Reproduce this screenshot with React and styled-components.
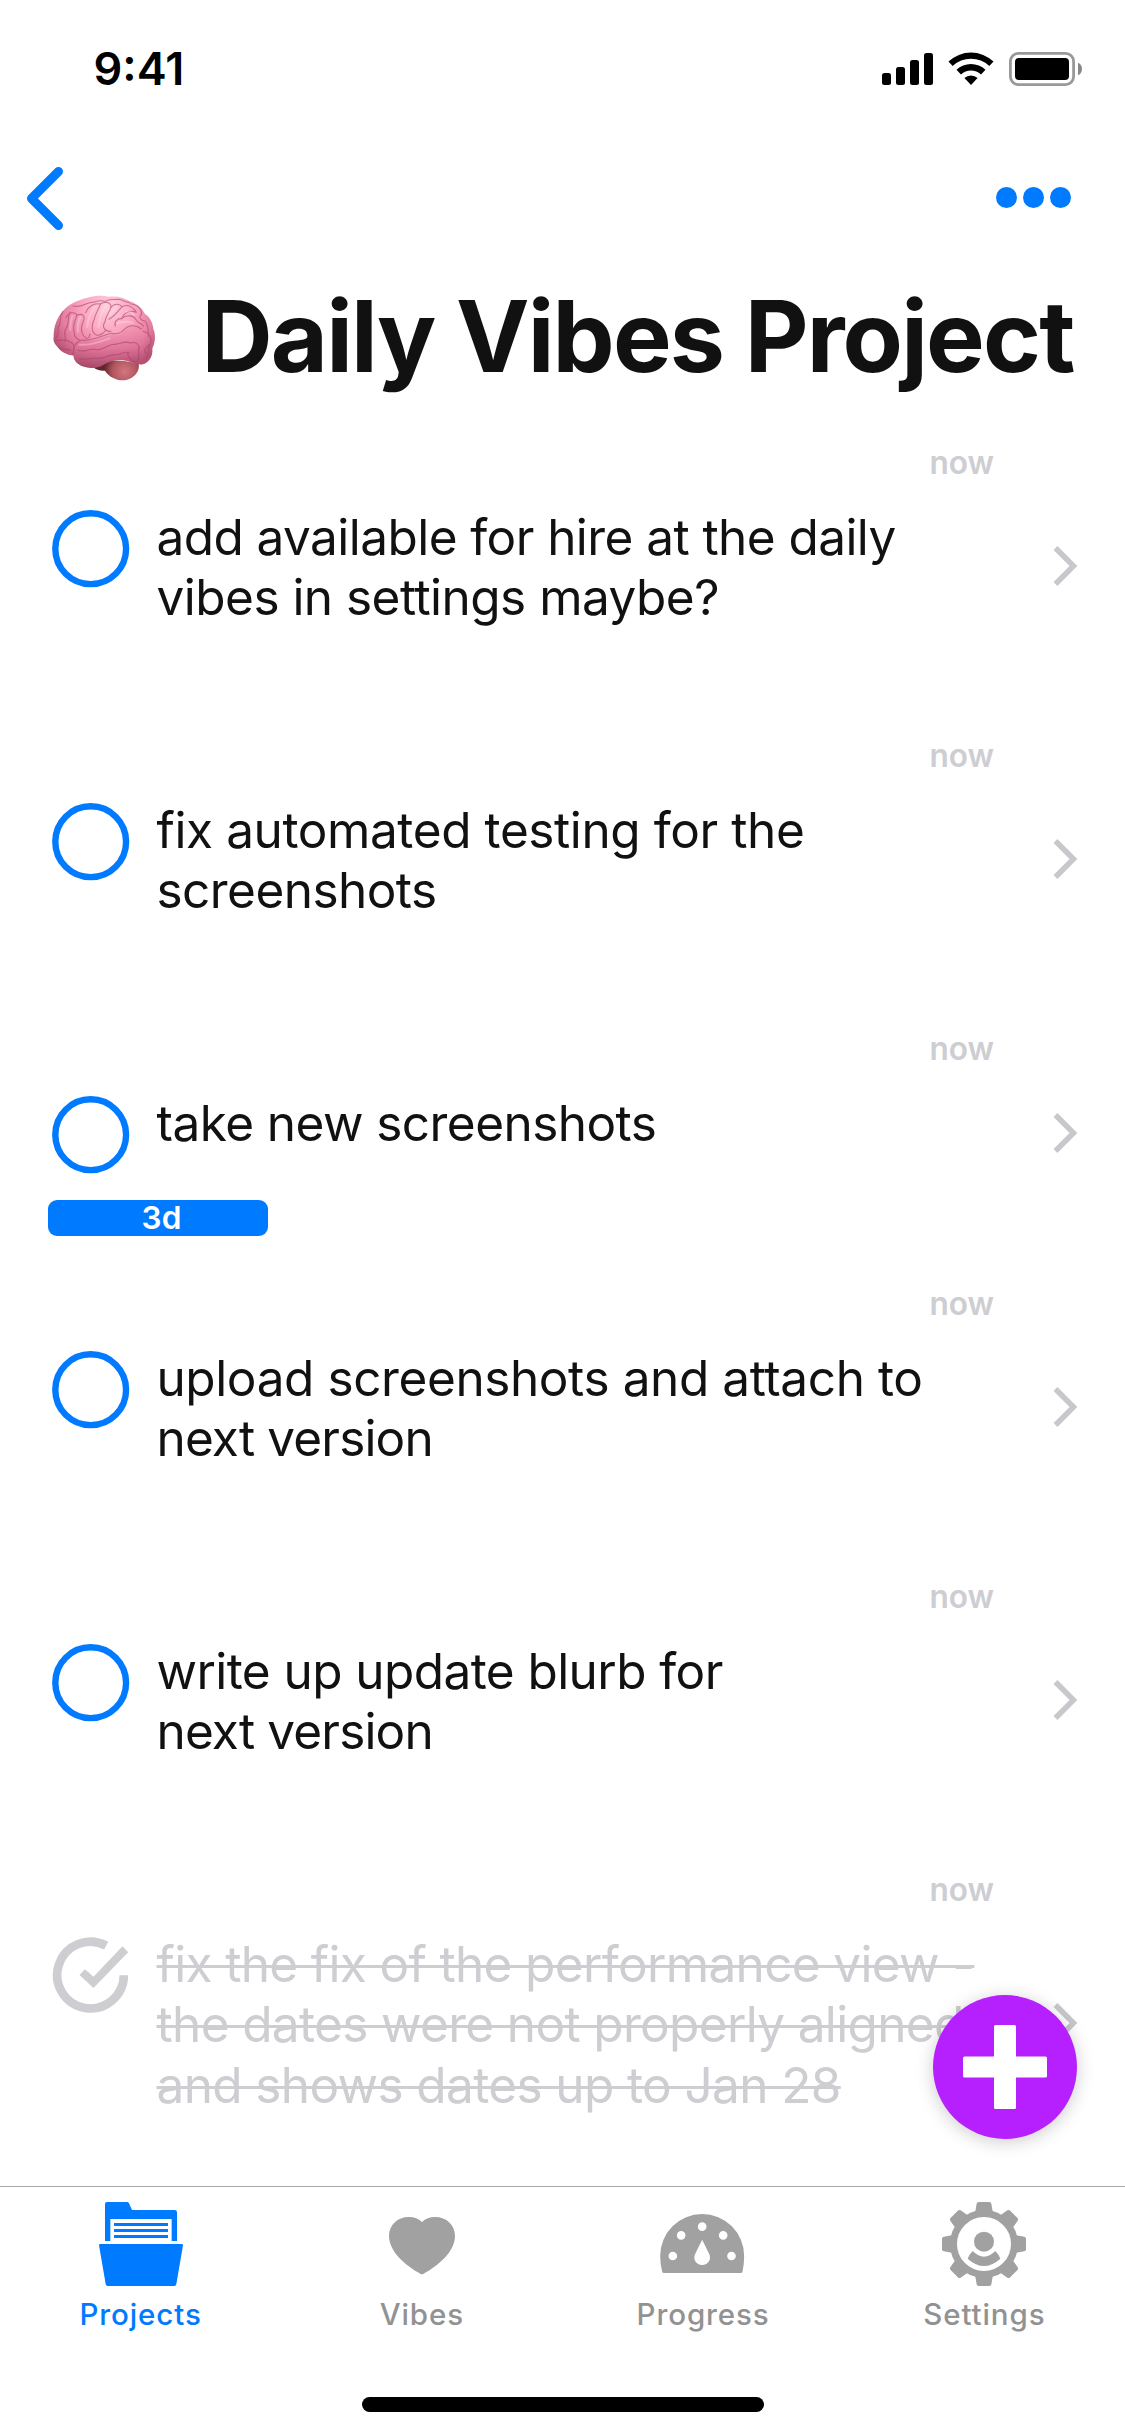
import React from "react";
import styled, { createGlobalStyle } from "styled-components";

const BLUE = "#007aff";
const MUTED = "#cdcdd2";

const GlobalStyle = createGlobalStyle`
  * { box-sizing: border-box; }
  body { margin: 0; background: #fff; }
`;

const Screen = styled.div`
  position: relative;
  display: flex;
  flex-direction: column;
  width: 1125px;
  height: 2436px;
  overflow: hidden;
  background: #fff;
  color: #111;
  font-family: Inter, "Liberation Sans", sans-serif;
`;

const StatusBar = styled.div`
  display: flex;
  justify-content: space-between;
  align-items: flex-start;
  height: 132px;
  padding: 42px 42px 0 93.5px;
  color: #000;
`;

const Clock = styled.span`
  font-size: 45px;
  font-weight: 600;
  line-height: 54px;
  letter-spacing: 0;
`;

const StatusIcons = styled.svg`
  width: 201px;
  height: 34px;
  margin-top: 10px;
`;

const NavBar = styled.header`
  display: flex;
  justify-content: space-between;
  height: 132px;
  padding: 35px 54px 0 26px;
`;

const BackIcon = styled.svg`
  width: 38px;
  height: 64px;
`;

const Dots = styled.div`
  display: flex;
  gap: 6px;
  padding-top: 20px;
`;

const Dot = styled.span`
  width: 21px;
  height: 21px;
  border-radius: 50%;
  background: ${BLUE};
`;

const TitleRow = styled.div`
  display: flex;
  height: 155px;
  padding: 12px 0 0 53px;
`;

const BrainIcon = styled.svg`
  flex: none;
  width: 103px;
  height: 86px;
  margin-top: 18.5px;
`;

const Title = styled.h1`
  margin: 0 0 0 45.5px;
  font-size: 98.6px;
  font-weight: 700;
  line-height: 120px;
  letter-spacing: -1.85px;
  white-space: nowrap;
`;

const List = styled.ul`
  flex: 1;
  min-height: 0;
  overflow: hidden;
  margin: 0;
  padding: 0;
  list-style: none;
`;

const Row = styled.li`
  display: flex;
  height: ${(p) => p.$height}px;
  padding: 0 46px 0 48px;
`;

const RowMain = styled.div`
  display: flex;
  flex: none;
  flex-direction: column;
  width: 946px;
  padding-top: 24px;
`;

const Time = styled.span`
  align-self: flex-end;
  font-size: 31.6px;
  font-weight: 600;
  line-height: 40px;
  color: ${MUTED};
`;

const Task = styled.div`
  display: flex;
  margin-top: 23.5px;
`;

const Check = styled.svg`
  flex: none;
  width: 78px;
  height: 78px;
  margin: 3px 27px 0 3.5px;
`;

const TaskText = styled.div`
  display: flex;
  flex-direction: column;
  align-items: flex-start;
  height: 81px;
  font-size: 49.5px;
  line-height: 60.5px;
  white-space: nowrap;
  color: ${(p) => (p.$done ? MUTED : "#111")};
`;

const Line = styled.span`
  letter-spacing: ${(p) => p.$tracking}px;
  text-decoration: ${(p) => (p.$done ? "line-through 3px" : "none")};
`;

const Badge = styled.span`
  width: 220px;
  height: 36px;
  margin-top: 26.5px;
  padding-left: 7px;
  border-radius: 9px;
  background: ${BLUE};
  color: #fff;
  font-size: 31.6px;
  font-weight: 600;
  line-height: 36px;
  text-align: center;
`;

const Chevron = styled.svg`
  flex: none;
  align-self: center;
  width: 26px;
  height: 42px;
  margin-left: 59px;
`;

const AddButton = styled.button`
  position: absolute;
  right: 48px;
  bottom: 297px;
  display: flex;
  align-items: center;
  justify-content: center;
  width: 144px;
  height: 144px;
  padding: 0;
  border: 0;
  border-radius: 50%;
  background: #b620ff;
  box-shadow: 0 3px 18px rgba(0, 0, 0, 0.2);
`;

const TabBar = styled.nav`
  display: flex;
  flex-direction: column;
  height: 250px;
  border-top: 1px solid #a9a9a9;
`;

const Tabs = styled.div`
  display: grid;
  grid-template-columns: repeat(4, 1fr);
`;

const Tab = styled.div`
  display: flex;
  flex-direction: column;
  align-items: center;
  padding-top: 15px;
  color: ${(p) => (p.$active ? BLUE : "#929292")};
`;

const TabIcon = styled.svg`
  width: 84px;
  height: 84px;
  fill: ${(p) => (p.$active ? BLUE : "#a1a1a1")};
`;

const TabLabel = styled.span`
  margin-top: 10px;
  font-size: 29.5px;
  font-weight: 500;
  line-height: 36px;
  letter-spacing: 0.9px;
`;

const HomeIndicator = styled.div`
  width: 402px;
  height: 15px;
  margin: 65px auto 0;
  border-radius: 8px;
  background: #000;
`;

function StatusGlyphs() {
  return (
    <StatusIcons viewBox="882 52 201 34">
      <rect x="882" y="73" width="9" height="12" rx="2.5" />
      <rect x="896" y="67" width="9" height="18" rx="2.5" />
      <rect x="910" y="60" width="9" height="25" rx="2.5" />
      <rect x="924" y="53" width="9" height="32" rx="2.5" />
      <path d="M948.5 61.6 A32.5 32.5 0 0 1 993.5 61.6 L989.3 66 A26.4 26.4 0 0 0 952.7 66 Z" />
      <path d="M956.5 69.8 A21 21 0 0 1 985.5 69.8 L981 74.4 A14.6 14.6 0 0 0 961 74.4 Z" />
      <path d="M964.4 78 A9.7 9.7 0 0 1 977.6 78 L971 85 Z" />
      <rect x="1010.4" y="53.4" width="63.2" height="31.2" rx="8" fill="none" stroke="#999" strokeWidth="2.8" />
      <rect x="1015" y="58" width="54" height="22" rx="4" />
      <path d="M1078 62.8 A6.8 6.8 0 0 1 1078 75.2 Z" fill="#888" />
    </StatusIcons>
  );
}

function Brain() {
  return (
    <BrainIcon viewBox="160 464 309 258">
      <defs>
        <radialGradient id="cortex" gradientUnits="userSpaceOnUse" cx="325" cy="500" r="190">
          <stop offset="0" stopColor="#ffcfde" />
          <stop offset="0.4" stopColor="#fba6c1" />
          <stop offset="0.75" stopColor="#e57c9f" />
          <stop offset="1" stopColor="#b65375" />
        </radialGradient>
        <linearGradient id="lobe" x1="0" y1="0" x2="0" y2="1">
          <stop offset="0" stopColor="#f293b1" />
          <stop offset="0.5" stopColor="#dd6f95" />
          <stop offset="1" stopColor="#9c405f" />
        </linearGradient>
        <radialGradient id="stem" gradientUnits="userSpaceOnUse" cx="375" cy="694" r="62">
          <stop offset="0" stopColor="#d4757f" />
          <stop offset="0.6" stopColor="#b0565f" />
          <stop offset="1" stopColor="#5f272d" />
        </radialGradient>
      </defs>
      <path d="M280 680 C300 664 345 650 417 672 C421 694 402 714 382 718 C358 724 330 713 316 691 C302 692 290 689 280 680Z" fill="url(#stem)" />
      <path d="M162 588 C162 560 171 532 190 512 C206 491 238 478 264 472 C290 464 310 465 328 469 C350 466 374 471 389 482 C414 490 428 505 436 521 C451 531 459 546 461 566 C470 587 465 611 458 624 C460 646 451 663 435 670 C418 677 398 670 384 662 C356 655 331 660 309 675 C287 687 252 684 237 672 C225 663 222 654 222 646 C203 644 180 633 174 620 C163 610 160 601 162 588Z" fill="url(#cortex)" />
      <path d="M223 628 C228 604 247 598 272 601 C300 600 320 583 343 583 C358 587 365 580 376 568 C392 553 417 556 430 571 C441 588 425 605 431 626 C437 646 423 657 407 668 C376 655 341 655 309 675 C287 687 252 684 237 672 C221 657 218 643 223 628Z" fill="url(#lobe)" opacity="0.62" />
      <g fill="none" stroke="#a84469" strokeWidth="3.2" strokeLinecap="round" strokeLinejoin="round" opacity="0.62">
        <path d="M222 642 C220 616 230 602 250 599 C280 602 306 588 328 580 C345 578 358 586 373 568 C388 552 410 554 425 566" />
        <path d="M235 629 C251 639 267 625 283 627 C305 634 323 613 342 612 C362 613 374 599 392 608 C406 604 415 611 419 620" />
        <path d="M240 655 C260 660 274 652 290 654 C312 658 328 642 346 643 C363 644 371 632 389 637" />
        <path d="M418 620 C413 637 424 651 411 668 M384 637 C382 650 398 661 407 666" />
        <path d="M166 599 C179 604 196 592 211 605 C223 608 228 621 218 641 M175 618 C187 629 198 624 213 630" />
        <path d="M190 513 C176 533 187 541 177 559 C172 571 182 577 170 591" />
        <path d="M199 532 C207 515 228 513 232 524 C225 544 218 560 224 579 C224 592 232 595 242 600" />
        <path d="M211 515 C200 539 211 549 199 565 C188 580 203 591 195 603" />
        <path d="M232 525 C249 517 258 528 251 543 C242 564 245 578 252 587 C262 600 273 591 270 581" />
        <path d="M258 517 C264 500 281 487 302 491 C298 507 287 519 284 536 C274 556 275 576 290 584 C301 588 315 575 319 569" />
        <path d="M302 491 C320 480 337 488 333 502 C330 515 318 526 316 544 C305 560 316 575 334 573" />
        <path d="M333 502 C344 488 360 490 367 499 C355 514 342 529 328 537" />
        <path d="M367 499 C386 489 403 503 410 516 C387 507 370 521 366 535 C352 534 342 546 347 557" />
        <path d="M366 535 C381 521 403 525 410 540 C418 553 431 548 431 558" />
        <path d="M220 497 C248 505 261 483 282 486 C299 476 310 484 318 483 C331 473 341 480 356 477 C370 477 377 487 389 486" />
        <path d="M391 490 C418 494 427 508 425 524 C415 529 423 541 436 542 C449 556 443 575 448 589" />
        <path d="M430 573 C445 576 459 590 452 611 C442 618 429 630 439 640 M452 612 C444 626 450 640 439 653" />
      </g>
      <g fill="none" stroke="#ffe3ec" strokeWidth="6" strokeLinecap="round" opacity="0.35">
        <path d="M218 527 C213 543 211 555 212 569" />
        <path d="M242 530 C235 546 233 560 235 574" />
        <path d="M285 500 C271 520 264 540 263 560" />
        <path d="M318 496 C304 514 300 535 296 560" />
        <path d="M350 499 C343 510 337 518 330 523" />
        <path d="M353 549 C372 542 386 543 399 548" />
        <path d="M379 514 C390 513 399 518 403 524" />
        <path d="M240 613 C270 617 301 604 330 594" />
      </g>
    </BrainIcon>
  );
}

function OpenCheck() {
  return (
    <Check viewBox="0 0 78 78">
      <circle cx="38.7" cy="38.7" r="35.4" fill="none" stroke={BLUE} strokeWidth="6.4" />
    </Check>
  );
}

function DoneCheck() {
  return (
    <Check viewBox="154.5 50 234 234">
      <path d="M317 76 A100 100 0 1 0 370 165" fill="none" stroke={MUTED} strokeWidth="26" />
      <path d="M253 147 L237 164 L279 203 L383 96 L366 78 L279 169 Z" fill={MUTED} />
    </Check>
  );
}

const icons = {
  projects: (
    <TabIcon $active viewBox="177 66 252 252">
      <path d="M195 183 V72 Q195 66 201 66 H261 Q265 66 267 70 L276 90 H404 Q411 90 411 97 V183 H395 V117 H211 V183 Z" />
      <path d="M222 129 H384 V138 H222 Z M222 147 H384 V156 H222 Z M222 165 H384 V174 H222 Z" />
      <path d="M180 192 H426 Q429 192 429 196 L409 312 Q408 318 403 318 H203 Q198 318 197 312 L177 196 Q177 192 180 192 Z" />
    </TabIcon>
  ),
  vibes: (
    <TabIcon viewBox="1020 66 252 252">
      <path d="M1146 126 C1156 116 1170 111 1185 111 C1220 111 1245 135 1245 168 C1245 215 1195 257 1151 281 Q1146 284 1141 281 C1097 257 1047 215 1047 168 C1047 135 1072 111 1107 111 C1122 111 1136 116 1146 126 Z" />
    </TabIcon>
  ),
  progress: (
    <TabIcon viewBox="182.5 66 252 252" overflow="visible">
      <path
        fillRule="evenodd"
        d="M191 279 Q187 279 186 275 Q180 252 180 228 A126 126 0 0 1 432 228 Q432 252 427 275 Q426 279 422 279 Z
        M293 140 a13 13 0 1 0 26 0 a13 13 0 1 0 -26 0 Z
        M230 166 a13 13 0 1 0 26 0 a13 13 0 1 0 -26 0 Z
        M356 166 a13 13 0 1 0 26 0 a13 13 0 1 0 -26 0 Z
        M205 228 a13 13 0 1 0 26 0 a13 13 0 1 0 -26 0 Z
        M381 228 a13 13 0 1 0 26 0 a13 13 0 1 0 -26 0 Z
        M306 179 L286 220 C276 238 288 255 306 255 C324 255 336 238 326 220 Z"
      />
    </TabIcon>
  ),
  settings: (
    <TabIcon viewBox="-126 -126 252 252">
      <circle r="91.5" fill="none" stroke="#a1a1a1" strokeWidth="21" />
      {[0, 45, 90, 135, 180, 225, 270, 315].map((angle) => (
        <path
          key={angle}
          transform={`rotate(${angle})`}
          d="M-27 -92 L-22 -121 Q-21 -126 -16 -126 H16 Q21 -126 22 -121 L27 -92 Z"
        />
      ))}
      <circle cy="-7" r="30" />
      <path d="M-34 21 Q0 55 34 21 Q44 31 49 44 Q0 88 -49 44 Q-44 31 -34 21 Z" />
    </TabIcon>
  ),
};

const tasks = [
  {
    lines: [
      { text: "add available for hire at the daily", tracking: -0.56 },
      { text: "vibes in settings maybe?", tracking: -0.52 },
    ],
    height: 293,
  },
  {
    lines: [
      { text: "fix automated testing for the", tracking: -0.4 },
      { text: "screenshots", tracking: -0.55 },
    ],
    height: 293,
  },
  { lines: [{ text: "take new screenshots", tracking: -0.55 }], height: 255, due: "3d" },
  {
    lines: [
      { text: "upload screenshots and attach to", tracking: -0.4 },
      { text: "next version", tracking: -0.85 },
    ],
    height: 293,
  },
  {
    lines: [
      { text: "write up update blurb for", tracking: -0.57 },
      { text: "next version", tracking: -0.85 },
    ],
    height: 293,
  },
  {
    lines: [
      { text: "fix the fix of the performance view -", tracking: -0.65 },
      { text: "the dates were not properly aligned", tracking: -0.65 },
      { text: "and shows dates up to Jan 28", tracking: -0.62 },
    ],
    height: 353,
    done: true,
  },
];

function TaskRow({ task }) {
  return (
    <Row $height={task.height}>
      <RowMain>
        <Time>now</Time>
        <Task>
          {task.done ? <DoneCheck /> : <OpenCheck />}
          <TaskText $done={task.done}>
            {task.lines.map(({ text, tracking }) => (
              <Line key={text} $done={task.done} $tracking={tracking}>
                {text}
              </Line>
            ))}
          </TaskText>
        </Task>
        {task.due && <Badge>{task.due}</Badge>}
      </RowMain>
      <Chevron viewBox="0 0 26 42">
        <path d="M2.5 3 L20.5 21 L2.5 39" fill="none" stroke="#c7c7cc" strokeWidth="5.4" />
      </Chevron>
    </Row>
  );
}

export default function App() {
  return (
    <Screen>
      <GlobalStyle />
      <StatusBar>
        <Clock>9:41</Clock>
        <StatusGlyphs />
      </StatusBar>
      <NavBar>
        <BackIcon viewBox="26 167 38 64">
          <path d="M58.5 171.5 L31.5 198.5 L58.5 225.5" fill="none" stroke={BLUE} strokeWidth="9" strokeLinecap="round" strokeLinejoin="round" />
        </BackIcon>
        <Dots>
          <Dot />
          <Dot />
          <Dot />
        </Dots>
      </NavBar>
      <TitleRow>
        <Brain />
        <Title>Daily Vibes Project</Title>
      </TitleRow>
      <List>
        {tasks.map((task) => (
          <TaskRow key={task.lines[0].text} task={task} />
        ))}
      </List>
      <AddButton aria-label="Add">
        <svg width="84" height="84" viewBox="0 0 84 84" fill="#fff">
          <rect x="31" width="22" height="84" rx="1.5" />
          <rect y="31.5" width="84" height="21" rx="1.5" />
        </svg>
      </AddButton>
      <TabBar>
        <Tabs>
          <Tab $active>
            {icons.projects}
            <TabLabel>Projects</TabLabel>
          </Tab>
          <Tab>
            {icons.vibes}
            <TabLabel>Vibes</TabLabel>
          </Tab>
          <Tab>
            {icons.progress}
            <TabLabel>Progress</TabLabel>
          </Tab>
          <Tab>
            {icons.settings}
            <TabLabel>Settings</TabLabel>
          </Tab>
        </Tabs>
        <HomeIndicator />
      </TabBar>
    </Screen>
  );
}
